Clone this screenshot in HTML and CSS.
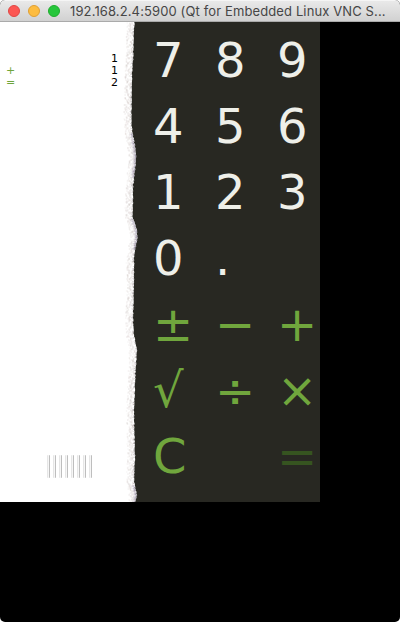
FILE: index.html
```html
<!DOCTYPE html>
<html lang="en">
<head>
<meta charset="utf-8">
<title>Calculator</title>
<link rel="stylesheet" href="styles.css">
</head>
<body>
<div class="window">
  <header class="titlebar">
    <span class="light close"></span><span class="light minimize"></span><span class="light zoom"></span>
    <span class="title">192.168.2.4:5900 (Qt for Embedded Linux VNC S...</span>
  </header>
  <main class="calculator">
    <section class="tape">
      <div class="history">
        <div class="line"><span class="op"></span><span>1</span></div>
        <div class="line"><span class="op">+</span><span>1</span></div>
        <div class="line"><span class="op">=</span><span>2</span></div>
      </div>
      <div class="grip"><i></i><i></i><i></i><i></i><i></i><i></i><i></i><i></i></div>
      <svg class="torn" width="20" height="480" viewBox="120 22 20 480" aria-hidden="true"></svg>
    </section>
    <section class="keypad">
      <span>7</span><span>8</span><span>9</span>
      <span>4</span><span>5</span><span>6</span>
      <span>1</span><span>2</span><span>3</span>
      <span>0</span><span>.</span><span></span>
      <span class="fn">±</span><span class="fn">−</span><span class="fn">+</span>
      <span class="fn">√</span><span class="fn">÷</span><span class="fn">×</span>
      <span class="fn">C</span><span></span><span class="fn dim">=</span>
    </section>
  </main>
</div>
<script src="edge.js"></script>
</body>
</html>
```
FILE: edge.js
```js
// Draws the torn right edge of the paper tape.
const outline = [[22,134.5],[40,133.5],[60,133],[75,132],[85,131.8],[110,131.5],[125,131.5],[135,133],[145,135],[155,136],[165,135.5],[172,134.5],[180,134],[185,133],[200,133],[217,132.5],[221,134],[230,137],[238,137.5],[248,135.5],[255,134],[280,134],[300,133.5],[320,133],[335,134],[340,135],[350,137],[365,136],[380,135],[400,134.5],[412,134],[440,134.5],[460,135],[480,134],[488,135.5],[495,137],[502,135]];
let seed = 7;
const random = () => (seed = (seed * 16807) % 2147483647) / 2147483647;
function edgeAt(y) {
  let i = 1;
  while (i < outline.length - 1 && outline[i][0] < y) i++;
  const [y0, x0] = outline[i - 1], [y1, x1] = outline[i];
  return x0 + (x1 - x0) * (y - y0) / (y1 - y0);
}
let path = 'M120 22', specks = '';
const speck = (x, y, color, opacity, height = 1) => {
  specks += `<rect x="${x.toFixed(1)}" y="${y}" width="1.4" height="${height}" fill="${color}" opacity="${opacity.toFixed(2)}"/>`;
};
for (let y = 22; y < 502; y++) {
  const x = edgeAt(y) + (random() - 0.5) * 0.9;
  path += `L${x.toFixed(2)} ${y}`;
  const shaded = (y > 132 && y < 178) || (y > 217 && y < 250) || y > 484;
  for (let k = 0; k < 3; k++) {
    const distance = 1.5 + random() * 6.5;
    speck(x - distance, y, '#c3b7b2', 0.05 + random() * 0.24 * (1 - distance / 14), 2);
  }
  if (random() < 0.5) speck(x - 1.4, y, '#8f868c', 0.1 + random() * 0.35);
  if (shaded) {
    speck(x - 1.4, y, '#8c8499', 0.2 + random() * 0.5);
    speck(x - 2.4, y, '#aaa0b4', 0.1 + random() * 0.4);
    speck(x - 3.4, y, '#b8b0c0', random() * 0.35);
  }
}
path += 'L135 502L120 502Z';
document.querySelector('.torn').innerHTML = `<path d="${path}" fill="#fff"/>${specks}`;
```
FILE: styles.css
```css
* { box-sizing: border-box; }
html { background: #fff; }
body { margin: 0; }
.window {
  width: 400px;
  height: 622px;
  overflow: hidden;
  background: #000;
  border-radius: 5px;
}
.titlebar {
  display: flex;
  align-items: center;
  height: 22px;
  padding-left: 8px;
  background: linear-gradient(#e9e9e9, #d1d1d1);
  border-top: 1px solid #f5f5f5;
  border-bottom: 1px solid #aaa;
}
.light {
  width: 12px;
  height: 12px;
  margin-right: 8px;
  border-radius: 50%;
  border: 1px solid;
}
.close { background: #fc5753; border-color: #df4744; }
.minimize { background: #fdbc40; border-color: #de9f34; }
.zoom { background: #26c63b; border-color: #1fac2d; }
.title {
  margin-left: 2px;
  font: 13px/20px Inter, sans-serif;
  letter-spacing: 0.12px;
  color: #464646;
  white-space: nowrap;
}
.calculator {
  display: flex;
  width: 320px;
  height: 480px;
  background: #282822;
}
.tape {
  position: relative;
  display: flex;
  flex-direction: column;
  justify-content: space-between;
  width: 130px;
  padding: 31px 12px 24px 6px;
  background: #fff;
}
.history { font: 11px/12px "DejaVu Sans", sans-serif; color: #000; }
.line { display: flex; justify-content: space-between; height: 12px; }
.op { color: #6fa53c; }
.grip { display: flex; gap: 3px; margin-left: 41px; }
.grip i {
  width: 3px;
  height: 23px;
  border-radius: 1px;
  background: linear-gradient(90deg, #e6e6e6 0 1px, #f6f6f6 1px 2px, #bebebe 2px);
}
.torn { position: absolute; left: 120px; top: 0; }
.keypad {
  display: grid;
  grid-template-columns: repeat(3, 62px);
  grid-template-rows: repeat(7, 66px);
  width: 190px;
  padding: 5px 0 0 23px;
  font: 48px/66px "DejaVu Sans", sans-serif;
  color: #eeefe9;
}
.keypad span { width: 40px; }
.keypad .fn { color: #70a63d; }
.keypad .dim { color: #365420; }
```
